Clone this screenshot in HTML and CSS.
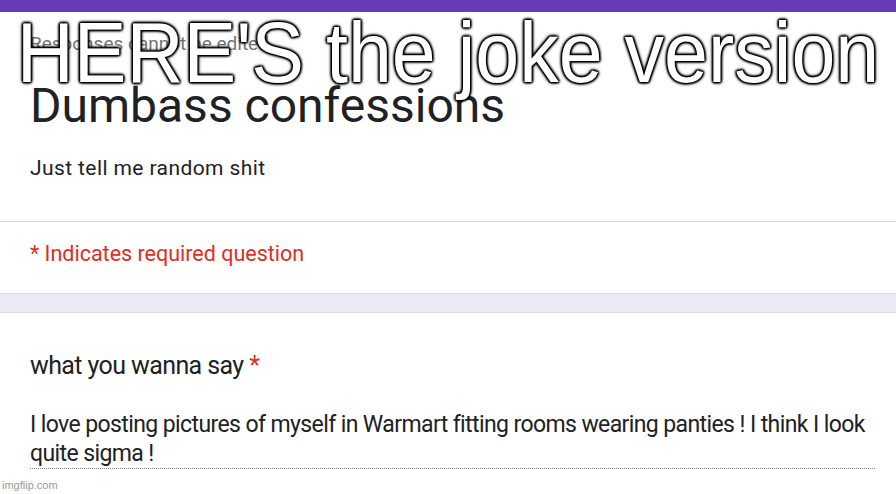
FILE: index.html
```html
<!DOCTYPE html>
<html lang="en">
<head>
    <meta charset="UTF-8">
    <meta name="viewport" content="width=device-width, initial-scale=1.0">
    <title>Dumbass confessions</title>
    <link rel="stylesheet" href="styles.css">
</head>
<body>
    <div class="topbar"></div>

    <div class="card header-card">
        <div class="intro">
            <p class="notice">Responses cannot be edited</p>
            <h1 class="form-title">Dumbass confessions</h1>
            <p class="form-desc">Just tell me random shit</p>
        </div>
        <div class="required-note">* Indicates required question</div>
    </div>

    <div class="gap"></div>

    <div class="card question-card">
        <div class="question">what you wanna say <span class="star">*</span></div>
        <div class="answer">I love posting pictures of myself in Warmart fitting rooms wearing panties ! I think I look quite sigma !</div>
    </div>

    <!-- meme overlay -->
    <div class="caption">HERE'S the joke version</div>
    <div class="watermark">imgflip.com</div>
</body>
</html>
```

FILE: styles.css
```css
body {
    margin: 0;
    background: #fff;
    font-family: Roboto, "Noto Sans", Arial, sans-serif;
    color: #202124;
    position: relative;
    height: 494px;
    overflow: hidden;
}
p {
    margin: 0;
}
.topbar {
    height: 12px;
    background-color: #673ab7;
}
.card {
    background: #fff;
}
.intro {
    padding: 20px 30px 39px;
    border-bottom: 1px solid #dadce0;
}
.notice {
    font-size: 19px;
    line-height: 24px;
    color: #70757a;
}
.form-title {
    margin: 22px 0 0;
    font-size: 48px;
    line-height: 56px;
    font-weight: 400;
}
.form-desc {
    margin-top: 20px;
    font-size: 21px;
    line-height: 28px;
    letter-spacing: 0.4px;
}
.required-note {
    padding: 18px 30px 25px;
    font-size: 21.5px;
    line-height: 28px;
    color: #d93025;
}
.gap {
    height: 18px;
    background-color: #ece9f6;
    border-top: 1px solid #dadce0;
    border-bottom: 1px solid #dadce0;
}
.question-card {
    padding: 38px 21px 0 30px;
}
.question {
    font-size: 25px;
    line-height: 30px;
    letter-spacing: -0.6px;
}
.star {
    color: #d93025;
}
.answer {
    margin-top: 29px;
    font-size: 23px;
    line-height: 29px;
    letter-spacing: -0.6px;
    border-bottom: 1px dotted #80868b;
}

/* overlay text */
.caption {
    position: absolute;
    top: 10px;
    left: 0;
    right: 0;
    text-align: center;
    font-family: "Liberation Sans", Arial, sans-serif;
    font-size: 79px;
    line-height: 1;
    color: #fff;
    transform: scaleY(1.07);
    transform-origin: top center;
    text-shadow: 0 0 2px #000, 0 0 3px #000, 0 0 4px #000, 1px 1px 2px #000, -1px -1px 2px #000, 1px -1px 2px #000, -1px 1px 2px #000;
}
.watermark {
    position: absolute;
    left: 2px;
    bottom: 3px;
    font-family: "Liberation Sans", Arial, sans-serif;
    font-size: 11px;
    color: #9a9a9a;
}
```
